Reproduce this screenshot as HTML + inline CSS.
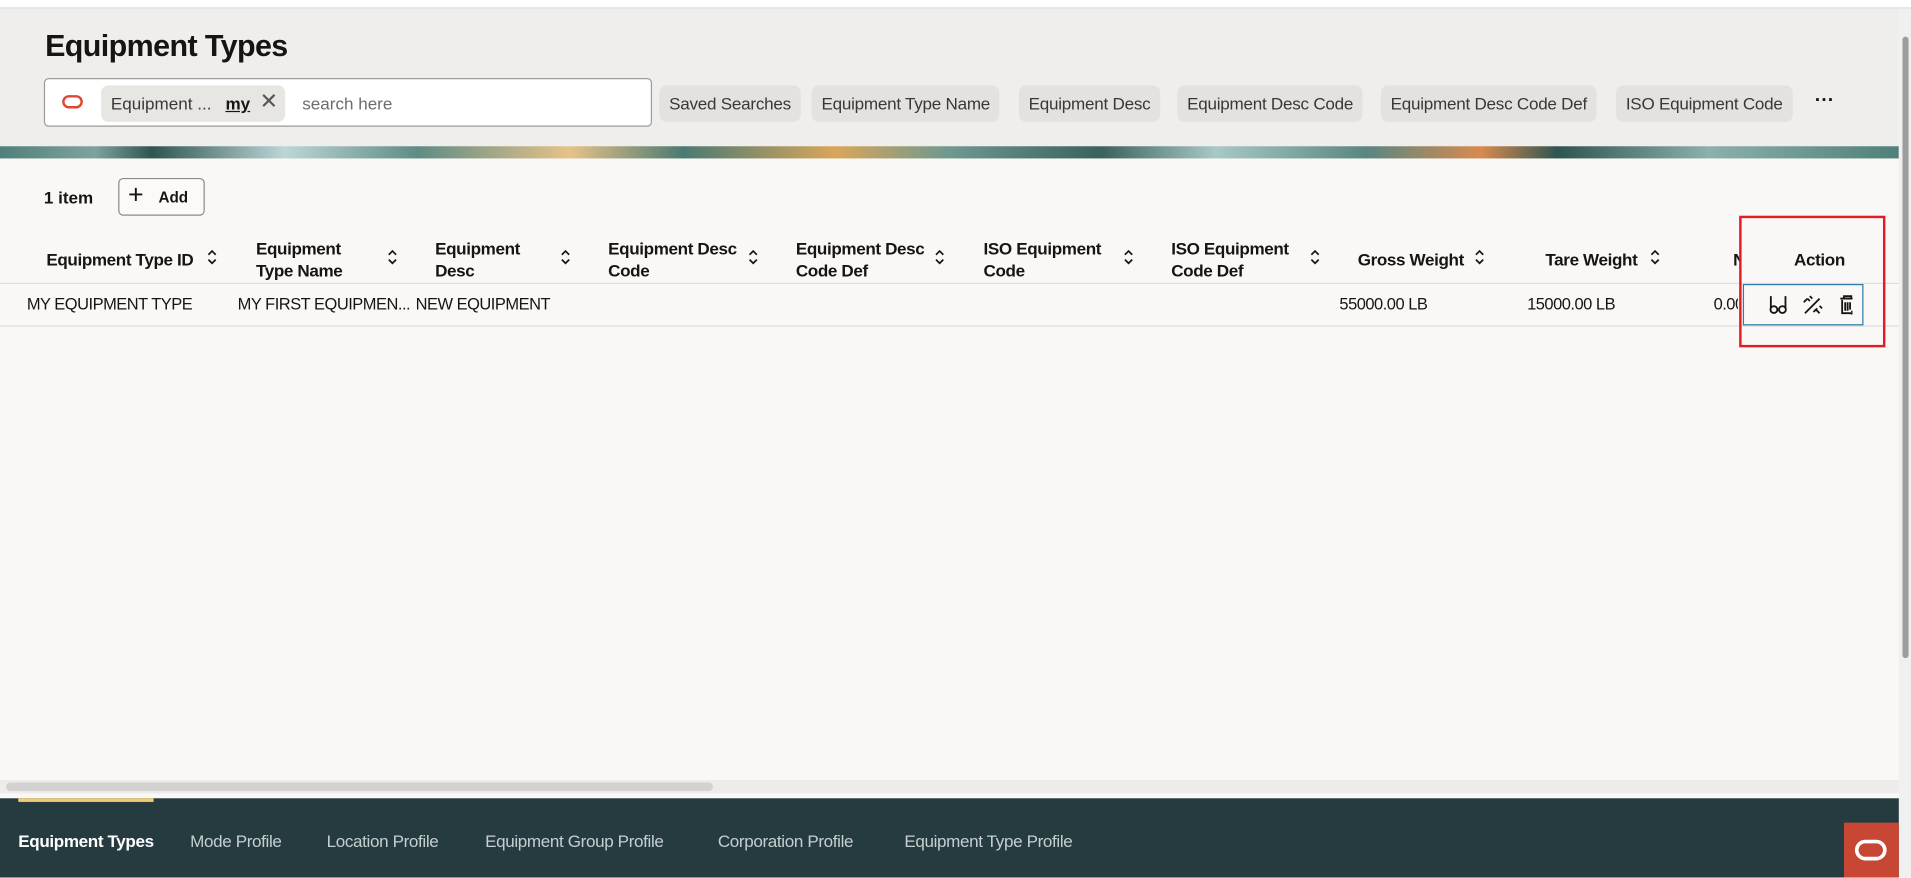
<!DOCTYPE html>
<html><head><meta charset="utf-8"><style>
*{margin:0;padding:0;box-sizing:border-box}
html,body{width:1911px;height:877px;overflow:hidden;background:#f9f8f6}
#w{position:absolute;left:0;top:0;width:1568px;height:720px;transform:scale(1.21875);transform-origin:0 0;font-family:"Liberation Sans",sans-serif;color:#161513;background:#f9f8f6}
.a{position:absolute;white-space:nowrap}
.chip{position:absolute;top:70px;height:30px;background:#e4e2df;border-radius:6px;font-size:14px;line-height:30px;padding:0 8px;color:#3a3836;letter-spacing:-0.2px}
.h{position:absolute;font-size:14px;font-weight:bold;line-height:18px;letter-spacing:-0.3px}
.s{position:absolute;top:204px;width:10px;height:14px}
.c{position:absolute;top:242px;font-size:13.5px;letter-spacing:-0.4px}
.n{position:absolute;top:682px;font-size:14px;color:#c6cfcf;letter-spacing:-0.3px}
</style></head><body><div id="w">
<div class="a" style="left:0;top:0;width:1568px;height:7px;background:#fff;border-bottom:1px solid #e0dedb"></div>
<div class="a" style="left:0;top:7px;width:1558px;height:113px;background:#efeeec"></div>
<div class="a" style="left:37px;top:24px;font-size:25px;font-weight:bold;letter-spacing:-0.5px">Equipment Types</div>
<div class="a" style="left:36px;top:64px;width:499px;height:40px;background:#fff;border:1px solid #9e9b98;border-radius:4px"></div>
<div class="a" style="left:51px;top:78px;width:17px;height:11px;border:2.5px solid #e0452f;border-radius:6px"></div>
<div class="a" style="left:83px;top:70px;width:151px;height:30px;background:#e8e6e3;border-radius:6px"></div>
<div class="a" style="left:91px;top:77px;font-size:14px;color:#3a3836">Equipment ...</div>
<div class="a" style="left:185px;top:77px;font-size:14px;font-weight:bold;text-decoration:underline">my</div>
<div class="a" style="left:213px;top:73px;font-size:18px;color:#555">✕</div>
<div class="a" style="left:248px;top:77px;font-size:14px;color:#6f6c69">search here</div>
<div class="chip" style="left:541px">Saved Searches</div>
<div class="chip" style="left:666px">Equipment Type Name</div>
<div class="chip" style="left:836px">Equipment Desc</div>
<div class="chip" style="left:966px">Equipment Desc Code</div>
<div class="chip" style="left:1133px">Equipment Desc Code Def</div>
<div class="chip" style="left:1326px">ISO Equipment Code</div>
<div class="a" style="left:1489px;top:74px;font-size:16px;font-weight:bold">···</div>
<div class="a" style="left:0;top:120px;width:1558px;height:10px;background:linear-gradient(90deg,#4f8079 0%,#7fa39c 5%,#2f5550 8%,#bcd6d6 15%,#5f8c84 22%,#e6c28a 30%,#4b7a72 36%,#d9a65a 44%,#6e9890 50%,#3b615b 58%,#a8c9c6 64%,#5a8680 72%,#d88a50 78%,#2f5550 82%,#8cb0aa 90%,#4f8079 100%)"></div>
<div class="a" style="left:36px;top:154px;font-size:14px;font-weight:bold">1 item</div>
<div class="a" style="left:97px;top:146px;width:71px;height:31px;border:1px solid #8d8a87;border-radius:4px;background:#fbfaf9"></div>
<div class="a" style="left:105px;top:149px;font-size:22px;line-height:22px">+</div>
<div class="a" style="left:130px;top:155px;font-size:12.5px;font-weight:bold">Add</div>
<div class="h" style="left:38px;top:204px">Equipment Type ID</div>
<div class="h" style="left:210px;top:195px">Equipment<br>Type Name</div>
<div class="h" style="left:357px;top:195px">Equipment<br>Desc</div>
<div class="h" style="left:499px;top:195px">Equipment Desc<br>Code</div>
<div class="h" style="left:653px;top:195px">Equipment Desc<br>Code Def</div>
<div class="h" style="left:807px;top:195px">ISO Equipment<br>Code</div>
<div class="h" style="left:961px;top:195px">ISO Equipment<br>Code Def</div>
<div class="h" style="left:1114px;top:204px">Gross Weight</div>
<div class="h" style="left:1268px;top:204px">Tare Weight</div>
<div class="h" style="left:1422px;top:204px;width:6px;overflow:hidden">N</div>
<div class="h" style="left:1472px;top:204px">Action</div>
<svg class="s" style="left:169px"><path d="M2 5l3-3 3 3M2 9l3 3 3-3" fill="none" stroke="#161513" stroke-width="1.4"/></svg>
<svg class="s" style="left:317px"><path d="M2 5l3-3 3 3M2 9l3 3 3-3" fill="none" stroke="#161513" stroke-width="1.4"/></svg>
<svg class="s" style="left:459px"><path d="M2 5l3-3 3 3M2 9l3 3 3-3" fill="none" stroke="#161513" stroke-width="1.4"/></svg>
<svg class="s" style="left:613px"><path d="M2 5l3-3 3 3M2 9l3 3 3-3" fill="none" stroke="#161513" stroke-width="1.4"/></svg>
<svg class="s" style="left:766px"><path d="M2 5l3-3 3 3M2 9l3 3 3-3" fill="none" stroke="#161513" stroke-width="1.4"/></svg>
<svg class="s" style="left:921px"><path d="M2 5l3-3 3 3M2 9l3 3 3-3" fill="none" stroke="#161513" stroke-width="1.4"/></svg>
<svg class="s" style="left:1074px"><path d="M2 5l3-3 3 3M2 9l3 3 3-3" fill="none" stroke="#161513" stroke-width="1.4"/></svg>
<svg class="s" style="left:1209px"><path d="M2 5l3-3 3 3M2 9l3 3 3-3" fill="none" stroke="#161513" stroke-width="1.4"/></svg>
<svg class="s" style="left:1353px"><path d="M2 5l3-3 3 3M2 9l3 3 3-3" fill="none" stroke="#161513" stroke-width="1.4"/></svg>
<div class="a" style="left:0;top:232px;width:1558px;height:1px;background:#dedcda"></div>
<div class="a" style="left:0;top:267px;width:1558px;height:1px;background:#dedcda"></div>
<div class="c" style="left:22px">MY EQUIPMENT TYPE</div>
<div class="c" style="left:195px;width:146px;overflow:hidden">MY FIRST EQUIPMEN...</div>
<div class="c" style="left:341px">NEW EQUIPMENT</div>
<div class="c" style="left:1099px">55000.00 LB</div>
<div class="c" style="left:1253px">15000.00 LB</div>
<div class="c" style="left:1406px;width:20px;overflow:hidden">0.00</div>
<div class="a" style="left:1430px;top:233px;width:99px;height:34px;border:1px solid #2f7aaa;background:#f9f8f6"></div>
<svg class="a" style="left:1450px;top:240px" width="70" height="20" viewBox="0 0 70 20">
<g fill="none" stroke="#161513" stroke-width="1.5">
<path d="M3 3v10M15 3v10"/><circle cx="5.5" cy="14" r="2.8"/><circle cx="12.5" cy="14" r="2.8"/><path d="M8.3 14h1.4"/>
<path d="M31 17l12-12M33 5l2 2M35 3l2 2M30 8l3-3M40 14l3 3M38 16l3-3M43 11l2 2"/>
<path d="M60 5h12M63 5V3h6v2M61.5 6v11h9M64 8v7M66 8v7M68 8v6"/><path d="M69 15l3 3M72 15l-3 3" stroke-width="1"/>
</g></svg>
<div class="a" style="left:1427px;top:177px;width:120px;height:108px;border:2px solid #e31b23"></div>
<div class="a" style="left:0;top:640px;width:1558px;height:11px;background:#edecea"></div>
<div class="a" style="left:5px;top:642px;width:580px;height:7px;background:#d3d2d0;border-radius:4px"></div>
<div class="a" style="left:1558px;top:7px;width:10px;height:713px;background:#f0f0f0"></div>
<div class="a" style="left:1561px;top:30px;width:5px;height:510px;background:#9d9d9d;border-radius:3px"></div>
<div class="a" style="left:0;top:655px;width:1558px;height:65px;background:#253b40"></div>
<div class="a" style="left:15px;top:655px;width:111px;height:3px;background:#f0cc71"></div>
<div class="n" style="left:15px;color:#fff;font-weight:bold">Equipment Types</div>
<div class="n" style="left:156px">Mode Profile</div>
<div class="n" style="left:268px">Location Profile</div>
<div class="n" style="left:398px">Equipment Group Profile</div>
<div class="n" style="left:589px">Corporation Profile</div>
<div class="n" style="left:742px">Equipment Type Profile</div>
<div class="a" style="left:1513px;top:675px;width:45px;height:45px;background:#c74634"></div>
<div class="a" style="left:1522px;top:689px;width:26px;height:17px;border:3px solid #fff;border-radius:9px"></div>
</div></body></html>
